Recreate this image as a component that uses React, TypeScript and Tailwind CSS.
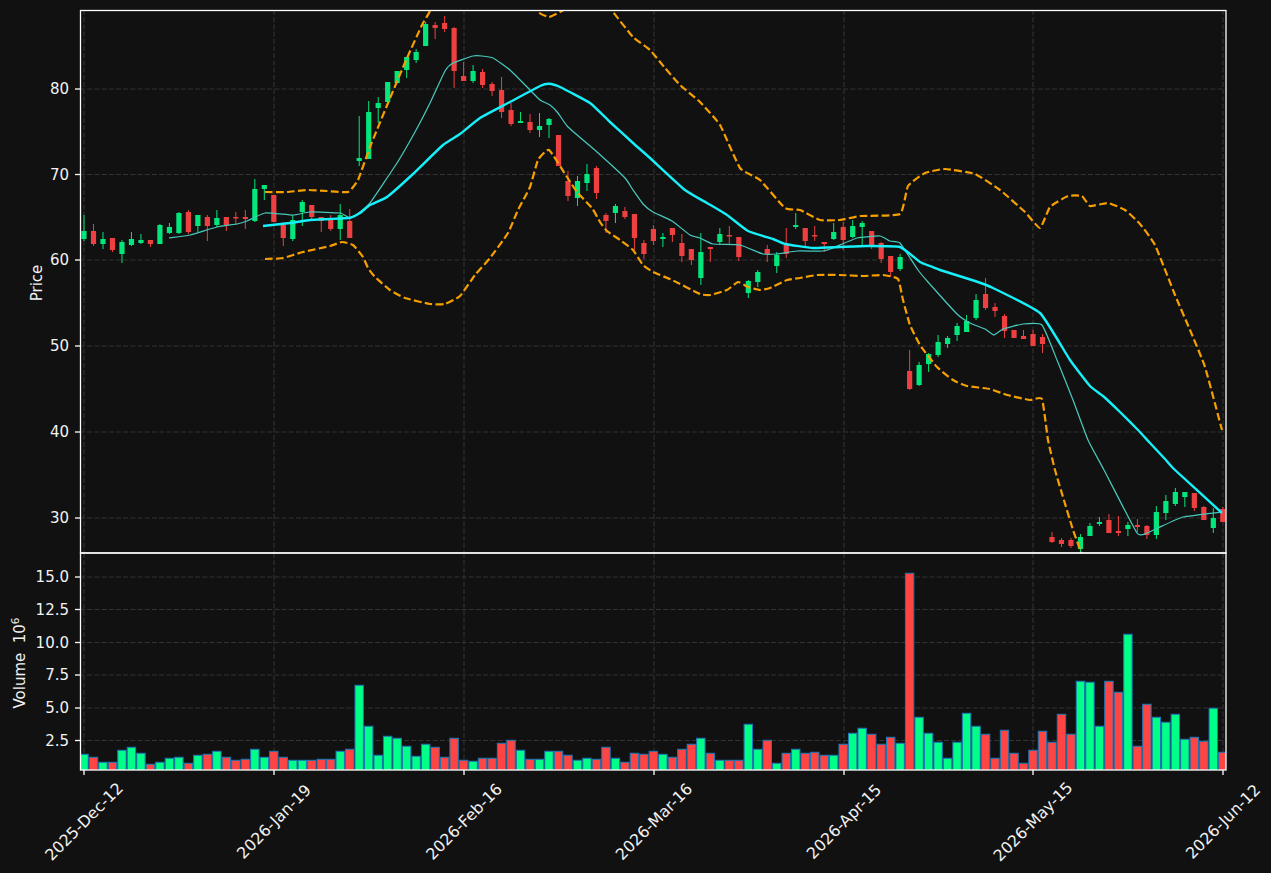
const X = (i: number) => 84 + 9.49 * i;

// [bodyTop, bodyBottom, wickTop, wickBottom, up(1)/down(0)] in picture pixels
const candles: number[][] = [
  [231,239,215,241,1],[231,244,224,246,0],[239,244,232,249,1],[238,250,238,252,0],[242,254,240,263,1],
  [239,245,232,246,1],[240,243,234,244,1],[240,244,240,247,0],[225,244,224,244,1],[227,233,223,234,1],
  [213,233,212,234,1],[212,232,210,234,0],[215,226,215,232,1],[217,226,215,241,0],[218,225,210,227,1],
  [217,225,217,231,0],[217,218,212,224,0],[217,219,210,229,0],[189,221,179,222,1],[185,189,185,200,1],
  [195,222,195,222,0],[225,238,222,246,0],[220,239,215,241,1],[202,212,200,226,1],[205,217,205,220,0],
  [217,221,217,232,0],[219,229,215,231,0],[215,229,204,240,1],[221,238,209,238,0],[158,161,116,166,1],
  [112,159,101,159,1],[103,108,97,123,1],[82,102,82,102,1],[71,83,71,83,1],[57,70,57,78,1],
  [52,60,49,63,1],[24,46,22,46,1],[25,28,22,39,0],[23,29,16,32,0],[28,71,27,88,0],
  [76,81,62,81,0],[71,81,65,83,1],[72,85,69,88,0],[84,91,82,96,0],[90,112,77,118,0],
  [110,124,103,126,0],[121,123,112,123,1],[122,130,114,133,0],[126,130,113,137,1],[119,125,118,138,1],
  [135,166,135,166,0],[181,196,171,201,0],[181,198,176,206,1],[174,183,164,191,1],[168,193,166,199,0],
  [215,221,213,233,0],[206,213,204,223,1],[211,217,207,219,0],[214,238,214,250,0],[243,254,240,259,0],
  [229,241,225,245,0],[237,239,233,247,1],[228,235,228,242,0],[243,256,234,262,0],[249,260,249,265,0],
  [252,278,233,285,1],[247,249,247,262,0],[234,242,228,245,1],[235,236,226,245,0],[237,257,237,261,0],
  [281,293,280,298,1],[272,282,270,287,1],[249,254,245,262,0],[255,266,252,273,1],[245,254,228,258,0],
  [225,227,213,229,1],[228,241,228,246,0],[235,236,226,241,0],[242,244,242,252,0],[232,239,223,240,1],
  [227,240,222,250,0],[226,237,220,238,1],[223,227,221,245,1],[231,245,231,249,0],[243,259,242,263,0],
  [256,272,256,277,0],[257,269,254,271,1],[371,389,350,390,0],[365,385,362,386,1],[354,364,353,372,1],
  [342,355,335,357,1],[338,344,336,348,1],[326,335,323,341,1],[321,332,315,332,1],[300,318,294,320,1],
  [294,308,278,310,0],[307,311,303,317,0],[316,331,314,338,0],[330,338,330,338,0],[336,339,330,339,0],
  [334,346,330,346,0],[337,344,334,353,0],[537,542,532,543,0],[540,544,538,547,0],[540,546,538,548,0],
  [537,549,534,553,1],[526,536,523,536,1],[522,524,517,526,1],[520,533,514,533,0],[531,533,516,536,0],
  [525,529,522,536,1],[525,527,519,532,0],[526,535,525,539,0],[512,535,506,539,1],[501,513,495,520,1],
  [492,504,488,506,1],[492,497,492,507,1],[493,508,493,511,0],[507,520,506,520,0],[518,528,508,533,1],
  [509,522,507,522,0],
];

// top of each volume bar in picture pixels
const volTops = [
  754,757,762,762,750,747,753,764,762,758,757,763,755,754,751,757,760,759,749,757,
  751,757,760,760,760,759,759,751,749,685,726,755,736,738,746,756,744,747,757,738,
  760,761,758,758,743,740,750,759,759,751,751,755,760,758,759,747,758,762,753,754,
  751,754,757,749,744,738,753,760,760,760,724,749,740,763,753,749,753,752,755,755,
  744,733,728,734,744,737,743,573,717,733,742,758,742,713,726,734,758,730,753,763,
  750,731,742,714,734,681,682,726,681,692,634,746,704,717,722,714,739,737,741,708,752,
];

const volUp = candles.map((c) => c[4] === 1);

const emaThick = "263,226 290,223 310,220 330,219 350,217.7 360,213 370,205 387,197 413,174 443,145 460,134 480,118 510,102 540,86 549,83.7 560,87 590,103 610,122 633,143 650,158 685,190 707,203 727,215 748,231 773,239 785,244 813,248 840,247 867,246 900,247 920,262 930,266 940,270 975,281 993,288 1040,313 1070,360 1090,386 1103,396 1120,412 1138,430 1150,443 1165,459 1175,470 1222,513";
const maThin = "169,238 190,235 217,227 237,224 247,221 265,213 293,215 310,212 340,213 350,218 360,212 370,203 397,163 415,132 430,103 445,71 453,63 473,56 482,56 493,58 510,70 530,90 540,100 550,105 558,113 568,127 597,152 625,178 633,190 643,204 653,212 672,221 690,235 700,238 713,244 740,245 763,254 777,254 797,251 823,251 833,248 857,238 880,236 890,241 900,243 918,270 928,282 957,314 970,323 985,329 994,335 1003,329 1023,324 1042,325 1057,360 1073,400 1088,440 1104,470 1137,533 1147,533 1158,528 1183,517 1222,512";
const bbUpper = "265,192 287,192 307,190 327,191 348,192 358,180 370,147 388,103 407,58 422,25 429,13 445,-15 500,-40 525,-8 538,12 549,17 560,12 572,5 590,-5 605,2 613,12 633,37 650,50 665,68 680,85 700,102 720,125 740,168 760,180 785,208 800,210 820,220 840,220 860,216 900,214 908,186 925,173 945,169 975,174 1000,190 1025,212 1040,228 1050,207 1068,196 1082,196 1090,206 1108,203 1125,210 1140,224 1155,245 1175,295 1190,330 1205,367 1222,430";
const bbLower = "265,259 283,258 303,252 330,246 342,242 353,245 363,257 368,268 375,277 390,290 405,298 430,304 445,304 460,296 475,275 490,258 508,233 518,210 530,187 538,160 549,150 567,177 577,192 592,208 600,222 607,231 620,240 633,250 643,265 653,272 672,280 700,294 710,295 727,290 738,282 748,287 760,290 770,288 787,280 800,278 817,275 840,275 863,276 883,275 898,279 903,300 910,325 920,345 937,367 953,380 967,386 990,389 1007,395 1030,400 1042,399 1048,440 1055,470 1063,497 1073,530 1081,552 1090,575";

// gently rounded path through the sampled points
function smooth(points: string): string {
  const p = points.split(" ").map((s) => s.split(",").map(Number));
  let d = `M${p[0][0]} ${p[0][1]}`;
  for (let i = 0; i < p.length - 1; i++) {
    const a = p[Math.max(i - 1, 0)];
    const b = p[i];
    const c = p[i + 1];
    const e = p[Math.min(i + 2, p.length - 1)];
    const k = 1 / 14;
    d += `C${b[0] + (c[0] - a[0]) * k} ${b[1] + (c[1] - a[1]) * k} ${c[0] - (e[0] - b[0]) * k} ${c[1] - (e[1] - b[1]) * k} ${c[0]} ${c[1]}`;
  }
  return d;
}

const priceTicks: [string, number][] = [["80",89],["70",174.5],["60",260],["50",346],["40",432],["30",518]];
const volTicks: [string, number][] = [["15.0",577],["12.5",609.5],["10.0",642.5],["7.5",675],["5.0",708],["2.5",740.5]];
const dateTicks: [string, number][] = [["2025-Dec-12",84],["2026-Jan-19",274],["2026-Feb-16",464],["2026-Mar-16",654],["2026-Apr-15",844],["2026-May-15",1033],["2026-Jun-12",1223]];

const labelClass = "fill-[#f2f2f2] text-[15px] font-['DejaVu_Sans',sans-serif]";
const dateClass = "fill-[#f2f2f2] text-[15.8px] font-['DejaVu_Sans',sans-serif]";

export default function App() {
  return (
    <div className="flex h-[873px] w-full bg-[#111111]">
      <svg width={1271} height={873} viewBox="0 0 1271 873" className="block shrink-0">
        <defs>
          <clipPath id="top"><rect x={80} y={10} width={1146} height={543} /></clipPath>
          <clipPath id="bottom"><rect x={80} y={553} width={1146} height={217} /></clipPath>
        </defs>

        {/* grid */}
        <g stroke="#333333" strokeWidth={1.1} strokeDasharray="5 2.2" fill="none">
          {priceTicks.map(([l, y]) => <line key={l} x1={80} x2={1226} y1={y} y2={y} />)}
          {volTicks.map(([l, y]) => <line key={l} x1={80} x2={1226} y1={y} y2={y} />)}
          {dateTicks.map(([l, x]) => (
            <g key={l}>
              <line x1={x} x2={x} y1={10} y2={553} />
              <line x1={x} x2={x} y1={553} y2={770} />
            </g>
          ))}
        </g>

        {/* candles */}
        <g clipPath="url(#top)">
          {candles.map((c, i) => {
            const x = X(i);
            const color = c[4] === 1 ? "#03e67c" : "#ee4040";
            return (
              <g key={i}>
                <line x1={x} x2={x} y1={c[2]} y2={c[3]} stroke={color} strokeWidth={1} />
                <rect x={x - 2.6} y={c[0]} width={5.2} height={Math.max(c[1] - c[0], 1.5)} fill={color} />
              </g>
            );
          })}
          <path d={smooth(maThin)} fill="none" stroke="#48c8bc" strokeWidth={1.25} />
          <path d={smooth(emaThick)} fill="none" stroke="#16f0fa" strokeWidth={2.4} />
          <path d={smooth(bbUpper)} fill="none" stroke="#f5a000" strokeWidth={2.2} strokeDasharray="7.7 3.3" />
          <path d={smooth(bbLower)} fill="none" stroke="#f5a000" strokeWidth={2.2} strokeDasharray="7.7 3.3" />
        </g>

        {/* volume */}
        <g clipPath="url(#bottom)">
          {volTops.map((t, i) => (
            <rect
              key={i}
              x={X(i) - 4.2}
              y={t + 0.3}
              width={8.4}
              height={775 - t}
              fill={volUp[i] ? "#00ff88" : "#ff4444"}
              stroke="#1f77b4"
              strokeWidth={1.05}
            />
          ))}
        </g>

        {/* frames */}
        <g stroke="#ffffff" strokeWidth={1.3} fill="none">
          <rect x={80.5} y={10.5} width={1145.5} height={542.5} />
          <rect x={80.5} y={553} width={1145.5} height={217} />
          {[...priceTicks, ...volTicks].map(([l, y]) => <line key={l} x1={75} x2={80} y1={y} y2={y} />)}
          {dateTicks.map(([l, x]) => <line key={l} x1={x} x2={x} y1={770} y2={775} />)}
        </g>

        {/* labels */}
        {[...priceTicks, ...volTicks].map(([l, y]) => (
          <text key={l} x={69} y={y} textAnchor="end" dominantBaseline="central" className={labelClass}>{l}</text>
        ))}
        {dateTicks.map(([l, x]) => (
          <text
            key={l}
            x={x}
            y={821.5}
            textAnchor="middle"
            dominantBaseline="central"
            transform={`rotate(-45 ${x} 821.5)`}
            className={dateClass}
          >
            {l}
          </text>
        ))}
        <text x={37} y={283} textAnchor="middle" dominantBaseline="central" transform="rotate(-90 37 283)" className={labelClass}>Price</text>
        <text x={20} y={663} textAnchor="middle" dominantBaseline="central" transform="rotate(-90 20 663)" className={labelClass}>
          {"Volume\u00a0\u00a010"}
          <tspan dy={-5} className="text-[10.5px]">6</tspan>
        </text>
      </svg>
    </div>
  );
}
